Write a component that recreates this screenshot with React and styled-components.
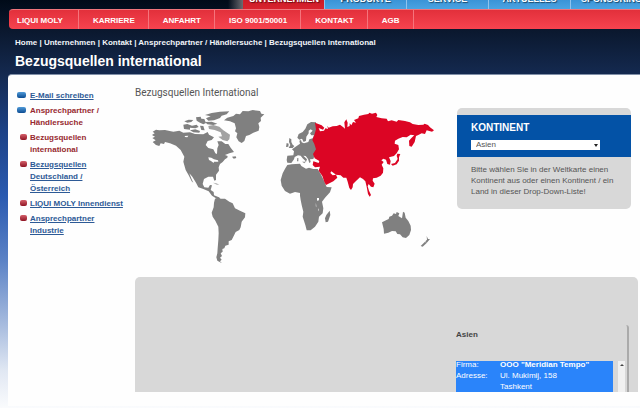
import React from "react";
import styled, { createGlobalStyle } from "styled-components";

const GlobalStyle = createGlobalStyle`
  * {
    box-sizing: border-box;
  }
  body {
    margin: 0;
    font-family: "Liberation Sans", Arial, sans-serif;
    font-size: 8px;
    color: #555555;
  }
  a {
    color: inherit;
    text-decoration: none;
  }
`;

const Page = styled.div`
  min-height: 100vh;
  padding-left: 8px;
  overflow: hidden;
  background: linear-gradient(
    #000a18 0%,
    #0b1930 8%,
    #14294f 18%,
    #1d4286 32%,
    #2a5ab0 48%,
    #5c83c6 64%,
    #a9bddf 80%,
    #e1e8f3 91%,
    #fafbfd 100%
  );
`;

const TabBar = styled.nav`
  display: flex;
  align-items: flex-end;
  height: 9px;
  margin-left: 220px;
  padding-left: 15px;
  overflow: hidden;
  background: linear-gradient(90deg, transparent 0px, #6b6b70 15px);
`;

const Tab = styled.a`
  flex: 1 0 ${props => (props.$active ? "81px" : "82px")};
  height: 24px;
  padding-top: 8px;
  border-left: 1px solid ${props => (props.$active ? "#d3202a" : "#8fc4ee")};
  font-size: 9px;
  font-weight: bold;
  line-height: 12px;
  text-align: center;
  white-space: nowrap;
  text-shadow: 1px 1px 1px #00000088;
  color: #ffffff;
  background: ${props =>
    props.$active
      ? "linear-gradient(#b80f1b, #d9232e)"
      : "linear-gradient(#1f7ac4, #4ba3e2)"};
`;

const SubNav = styled.nav`
  display: flex;
  height: 20px;
  margin-left: 1px;
  border-top: 1px solid #f0747b;
  border-radius: 4px 0 0 4px;
  background: linear-gradient(#e2303b, #f7434f);
`;

const SubLink = styled.a`
  padding: 0 13px 0 14px;
  border-right: 1px solid #f5747c;
  font-size: 8px;
  font-weight: bold;
  line-height: 22px;
  color: #ffffff;

  &:first-child {
    padding: 0 15px 0 8px;
  }
`;

const Breadcrumb = styled.div`
  padding: 8px 7px 0;
  font-size: 8px;
  font-weight: bold;
  line-height: 12px;
  color: #f2f5fa;
`;

const PageTitle = styled.h1`
  margin: 0;
  padding: 4px 7px 5px;
  font-size: 14px;
  line-height: 16px;
  color: #ffffff;
`;

const Content = styled.div`
  display: flex;
  padding: 15px 0 14px 8px;
  border-top: 1px solid #8190a8;
  border-radius: 4px 0 0 0;
  background: #fefefe;
`;

const SideMenu = styled.ul`
  flex: none;
  width: 119px;
  margin: 0;
  padding: 0 12px 0 1px;
  list-style: none;
`;

const SideItem = styled.li`
  display: flex;
  gap: ${props => (props.$sub ? "3px" : "4px")};
  padding-left: ${props => (props.$sub ? "3px" : "0")};
  margin-bottom: 3px;
  font-weight: bold;
  line-height: 12px;
  white-space: pre-line;
  color: ${props => (props.$active ? "#97292f" : "#2d5a96")};

  &::before {
    content: "";
    flex: none;
    width: ${props => (props.$sub ? "7px" : "9px")};
    height: 6px;
    margin-top: 2px;
    border-radius: 2px;
    background: ${props =>
      props.$sub
        ? "linear-gradient(#d4606a, #8f1424)"
        : "linear-gradient(#4f9ad8, #0c4c92)"};
  }

  a {
    text-decoration: ${props => (props.$active ? "none" : "underline")};
  }
`;

const Main = styled.main`
  flex: 1;
  min-width: 0;
`;

const Intro = styled.h2`
  margin: -3px 0 0;
  font-family: Roboto, sans-serif;
  font-size: 10px;
  font-weight: normal;
  line-height: 12px;
`;

const MapRow = styled.div`
  display: flex;
  justify-content: space-between;
  padding: 6px 9px 8px 15px;
`;

const WorldMap = styled.svg`
  flex: none;
  width: 288px;
  height: 164px;
`;

const ContinentBox = styled.section`
  align-self: flex-start;
  width: 174px;
  margin-top: 3px;
  padding-top: 7px;
  border-radius: 5px;
  background: #d8d8d8;
`;

const BoxHead = styled.div`
  padding: 6px 14px 7px;
  background: #0352a6;
`;

const BoxLabel = styled.label`
  display: block;
  margin-bottom: 5px;
  font-size: 10px;
  font-weight: bold;
  line-height: 14px;
  color: #ffffff;
`;

const Select = styled.select`
  display: block;
  appearance: none;
  width: 129px;
  height: 10px;
  padding: 0 5px;
  border: none;
  border-radius: 0;
  font-family: inherit;
  font-size: 8px;
  line-height: 10px;
  color: #555555;
  background: #ffffff;
`;

const SelectWrap = styled.div`
  position: relative;
  width: 129px;

  &::after {
    content: "";
    position: absolute;
    top: 4px;
    right: 2px;
    border: 2px solid transparent;
    border-top: 3px solid #222222;
    border-bottom: none;
    pointer-events: none;
  }
`;

const BoxText = styled.p`
  margin: 0;
  padding: 7px 14px 12px;
  line-height: 11px;
`;

const Results = styled.section`
  height: 115px;
  margin-right: 2px;
  padding: 48px 9px 0 0;
  border-radius: 5px 5px 0 0;
  background: #d8d8d8;
`;

const ResultFrame = styled.div`
  height: 67px;
  padding: 4px 2px 0 0;
  border-right: 2px solid #aaaaaa;
  border-radius: 0 3px 0 0;
`;

const ResultColumn = styled.div`
  width: 169px;
  margin-left: auto;
`;

const ResultTitle = styled.h3`
  margin: 0 0 20px;
  font-size: 8px;
  line-height: 12px;
  color: #444444;
`;

const ResultList = styled.div`
  display: flex;
  align-items: flex-end;
  height: 31px;
  overflow: hidden;
`;

const AddressTable = styled.table`
  width: 157px;
  border-collapse: collapse;
  line-height: 11px;
  color: #ffffff;
  background: #2a84fa;

  th,
  td {
    padding: 0;
    text-align: left;
    font-weight: normal;
  }
  th {
    width: 44px;
  }
  tr:first-child td {
    font-weight: bold;
  }
`;

const ScrollTrack = styled.div`
  align-self: stretch;
  width: 7px;
  margin-left: 5px;
  padding-top: 3px;
  background: #f1f1f1;

  &::before {
    content: "";
    display: block;
    width: 0;
    margin: 0 auto;
    border: 2px solid transparent;
    border-top: none;
    border-bottom: 2px solid #444444;
  }
`;

const tabs = ["UNTERNEHMEN", "PRODUKTE", "SERVICE", "AKTUELLES", "SPONSORING"];

const subLinks = ["LIQUI MOLY", "KARRIERE", "ANFAHRT", "ISO 9001/50001", "KONTAKT", "AGB"];

const menu = [
    { text: "E-Mail schreiben" },
    { text: "Ansprechpartner /\nHändlersuche", active: true },
    { text: "Bezugsquellen\ninternational", sub: true, active: true },
    { text: "Bezugsquellen\nDeutschland /\nÖsterreich", sub: true },
    { text: "LIQUI MOLY Innendienst", sub: true },
    { text: "Ansprechpartner\nIndustrie", sub: true }
];

function Continents() {
    return (
        <WorldMap viewBox="30 75 864 492" role="img" aria-label="Weltkarte">
            <g fill="#808080">
                {/* north america */}
                <path d="M38 155L48 149 58 151 75 150 100 155 118 152 130 158 150 157 165 162 190 163 203 156 207 164 222 172 215 180 203 183 197 195 205 204 220 208 226 220 231 222 232 205 236 195 232 184 245 184 256 192 265 192 272 203 282 216 268 220 255 225 263 228 262 233 255 238 248 246 240 252 236 262 237 272 228 284 228 300 223 302 219 290 205 290 192 297 188 312 193 322 205 323 210 315 216 316 212 330 221 336 222 346 233 350 240 353 228 355 216 347 206 334 190 327 175 322 168 308 157 290 148 280 155 298 160 308 155 304 146 286 137 270 130 245 133 230 122 210 108 197 90 190 75 186 72 192 62 190 58 198 48 195 38 186 47 181 37 174 45 170 36 165 44 160Z" />
                <path d="M130 134L142 132 156 137 170 134 176 141 166 145 150 143 150 149 132 147Z" />
                <path d="M133 124L146 119 160 120 154 126 142 128Z" />
                <path d="M168 112L182 110 184 116 193 117 198 129 190 133 180 128 170 122Z" />
                <path d="M150 151L166 148 180 153 178 158 160 157Z" />
                <path d="M180 137L190 138 194 151 184 150Z" />
                <path d="M195 105L215 99 240 95 268 94 260 103 245 107 240 114 222 121 205 122 198 115 212 109Z" />
                <path d="M195 126L215 125 232 131 220 135 202 133Z" />
                <path fill="#a2a2a2" d="M205 138L220 135 238 140 250 151 270 164 268 178 262 184 248 180 235 170 246 169 242 157 224 150 207 147Z" />
                <path d="M276 230L287 229 289 234 281 236Z" />
                {/* greenland */}
                <path d="M252 121L262 113 280 108 288 101 300 103 308 93 325 94 338 90 360 93 364 101 373 103 362 113 363 123 355 130 358 141 356 152 340 158 328 165 318 168 313 183 305 189 296 184 289 172 292 160 285 154 288 145 284 130 270 124Z" />
                {/* south america */}
                <path transform="translate(0 270)" d="M225 86L235 82 242 86 255 86 268 95 278 100 285 115 300 122 316 130 315 142 305 155 302 172 298 180 287 186 280 200 275 210 266 214 266 224 256 227 253 235 247 237 248 245 242 250 246 258 240 263 245 269 240 274 246 280 232 272 229 262 232 250 233 235 235 210 236 190 235 170 226 152 218 140 215 128 221 112 222 98Z" />
                {/* caribbean */}
                <path d="M219 308L230 310 238 315 230 314Z" fill="#b5b5b5" />
                <g transform="translate(420 255)">
                    {/* africa */}
                    <path d="M22 0L35 -2 60 -4 64 3 78 11 87 8 100 12 113 12 122 27 132 47 140 66 155 67 150 82 135 98 126 110 130 130 128 145 117 155 115 170 105 185 92 196 80 196 76 180 68 155 70 140 65 120 62 105 60 92 60 84 45 81 30 86 15 78 5 62 2 45 8 25 16 10Z" />
                    <path d="M149 137L151 150 144 170 137 172 135 160 139 150Z" />
                    {/* australia */}
                    <path d="M306 172L318 166 326 162 328 155 336 152 341 145 348 147 350 141 358 145 355 153 366 160 369 140 374 143 377 158 385 168 392 182 393 195 388 210 378 219 368 217 360 208 352 207 347 199 336 198 325 203 312 206 311 192Z" />
                    <path d="M440 213L444 222 450 222 440 234 436 229 441 224ZM435 230L440 234 428 245 422 243Z" />
                </g>
                {/* europe */}
                <g transform="translate(420 30)">
                    <path d="M108 97L93 96 82 103 76 116 68 126 56 132 52 143 58 149 66 146 71 156 78 152 79 140 86 130 86 122 92 118 98 122 90 130 94 136 102 136 98 145 88 148 85 156 72 160 65 157 63 150 58 152 60 161 50 168 36 178 42 184 40 196 22 197 20 210 22 218 34 219 42 208 44 201 54 196 62 197 68 205 76 212 77 218 81 208 70 197 77 198 84 207 88 219 92 216 90 208 100 207 106 190 112 180 108 160 110 120Z" />
                    <path d="M28 144L34 148 34 156 38 164 43 168 38 174 26 174 31 165 27 156ZM20 159L26 161 25 170 18 171Z" />
                    <path d="M52 204L55 204 55 214 51 214ZM66 215L75 215 74 220Z" />
                </g>
            </g>
            <g fill="#ffffff">
                <path d="M205 232L214 233 222 238 234 241 235 245 222 245 221 249 213 243 207 240Z" />
                <path d="M134 168L145 167 142 172 135 171Z" />
                <path d="M531 354L537 354 537 361 531 362Z" />
                <path fill="#c4c4c4" d="M527 369L529 374 530 382 527 379ZM534 385L537 388 537 394 534 391Z" />
            </g>
            {/* asia */}
            <g fill="#dc0524" transform="translate(420 30)">
                <path d="M105 98L125 106 133 113 129 119 116 114 120 124 132 122 136 115 144 117 142 107 146 113 158 109 170 108 180 104 190 112 195 116 193 97 199 88 203 98 202 111 209 108 209 100 214 106 219 96 228 98 222 90 235 85 237 78 252 74 265 72 268 68 276 71 288 68 292 75 289 81 305 85 320 86 324 94 335 91 350 95 355 90 375 93 390 97 398 102 415 105 430 104 434 101 444 105 450 112 462 121 456 125 440 121 435 132 425 130 415 135 408 138 404 156 395 170 388 168 387 152 395 143 403 136 392 134 380 142 368 141 355 146 345 152 344 161 355 165 357 178 350 190 342 198 327 202 332 213 330 224 322 222 318 209 310 206 304 211 311 216 305 224 310 235 309 248 302 257 290 263 279 265 278 272 284 281 280 292 273 290 266 282 263 289 267 302 273 315 269 320 264 312 260 290 256 274 249 267 240 262 228 273 219 282 218 292 213 300 208 294 203 275 199 263 190 263 182 256 168 254 154 244 151 249 158 256 168 254 172 263 160 274 138 285 133 276 127 258 116 242 120 230 105 232 98 225 100 214 116 219 118 213 104 205 99 192 108 178 103 162 97 150 103 135 108 118Z" />
                <path d="M352 191L361 192 357 202 357 212 350 223 338 227 333 222 345 219 353 207 350 197Z" />
            </g>
        </WorldMap>
    );
}

class App extends React.Component {

    constructor(props) {
        super(props);
        this.state = {
            continent: "Asien"
        };
    }

    handleInputChange(key, value) {
        this.setState({ [key]: value });
    }

    render() {
        return (
            <Page>
                <GlobalStyle />
                <TabBar>
                    {tabs.map((tab, i) => (
                        <Tab key={tab} href="#" $active={i === 0}>{tab}</Tab>
                    ))}
                </TabBar>
                <SubNav>
                    {subLinks.map(link => (
                        <SubLink key={link} href="#">{link}</SubLink>
                    ))}
                </SubNav>
                <Breadcrumb>
                    <a href="#">Home</a> | <a href="#">Unternehmen</a> | <a href="#">Kontakt</a> | <a href="#">Ansprechpartner / Händlersuche</a> | <a href="#">Bezugsquellen international</a>
                </Breadcrumb>
                <PageTitle>Bezugsquellen international</PageTitle>
                <Content>
                    <SideMenu>
                        {menu.map(item => (
                            <SideItem key={item.text} $sub={item.sub} $active={item.active}>
                                <a href="#">{item.text}</a>
                            </SideItem>
                        ))}
                    </SideMenu>
                    <Main>
                        <Intro>Bezugsquellen International</Intro>
                        <MapRow>
                            <Continents />
                            <ContinentBox>
                                <BoxHead>
                                    <BoxLabel htmlFor="continent">KONTINENT</BoxLabel>
                                    <SelectWrap>
                                        <Select
                                            id="continent"
                                            value={this.state.continent}
                                            onChange={e => {
                                                this.handleInputChange("continent", e.target.value);
                                            }}
                                        >
                                            <option>Asien</option>
                                        </Select>
                                    </SelectWrap>
                                </BoxHead>
                                <BoxText>
                                    Bitte wählen Sie in der Weltkarte einen Kontinent aus oder einen Kontinent / ein Land in dieser Drop-Down-Liste!
                                </BoxText>
                            </ContinentBox>
                        </MapRow>
                        <Results>
                            <ResultFrame>
                                <ResultColumn>
                                    <ResultTitle>{this.state.continent}</ResultTitle>
                                    <ResultList>
                                        <AddressTable>
                                            <tbody>
                                                <tr><th>Firma:</th><td>OOO "Meridian Tempo"</td></tr>
                                                <tr><th>Adresse:</th><td>Ul. Mukimij, 158</td></tr>
                                                <tr><th></th><td>Tashkent</td></tr>
                                            </tbody>
                                        </AddressTable>
                                        <ScrollTrack />
                                    </ResultList>
                                </ResultColumn>
                            </ResultFrame>
                        </Results>
                    </Main>
                </Content>
            </Page>
        );
    }
}

export default App;
